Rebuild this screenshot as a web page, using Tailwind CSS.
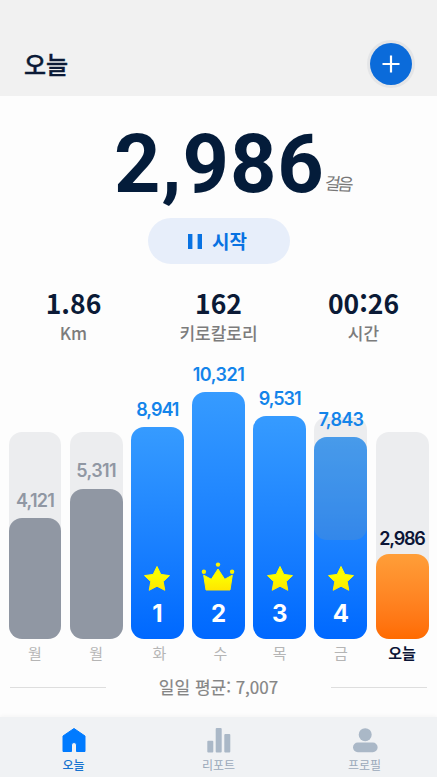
<!DOCTYPE html>
<html lang="ko">
<head>
  <meta charset="UTF-8" />
  <meta name="viewport" content="width=device-width, initial-scale=1.0" />
  <title>오늘</title>
  <script src="https://cdn.jsdelivr.net/npm/@tailwindcss/browser@4"></script>
</head>
<body class="bg-[#fdfdfd] font-['Noto_Sans_CJK_KR',sans-serif]">
  <div class="w-[437px] h-[777px] flex flex-col overflow-hidden">
    <!-- Header -->
    <header class="h-24 shrink-0 bg-[#f1f1f1] flex items-start justify-between pl-6 pr-[22px] pt-10">
      <h1 class="text-2xl leading-12 font-medium text-[#0b1a36] [-webkit-text-stroke:0.4px_#0b1a36]">오늘</h1>
      <button class="size-12 rounded-full bg-[#e4e5e7] flex items-center justify-center">
        <svg class="size-[42px]" viewBox="0 0 42 42">
          <circle cx="21" cy="21" r="21" fill="#0b6bda" />
          <path d="M21 12.5v17M12.5 21h17" stroke="#fff" stroke-width="2.2" />
        </svg>
      </button>
    </header>

    <!-- Step count -->
    <section class="h-[122px] shrink-0 flex items-end justify-start pl-[114px] pb-[6px]">
      <span class="font-[Roboto,sans-serif] font-bold text-[81px] leading-[94px] tracking-[1px] text-[#041c3a]">2,986</span>
      <span class="text-[17px] leading-6 text-[#777] -skew-x-6 rotate-3 tracking-[-2.5px] mb-[17px]">걸음</span>
    </section>
    <button class="w-[142px] h-[46px] shrink-0 mx-auto rounded-full bg-[#e7eefa] flex items-center justify-center gap-[10px] pr-0.5 text-[#0872e2]">
      <svg class="w-[14px] h-[15px]" viewBox="0 0 14 15" fill="currentColor">
        <path d="M0 0h4.4v15H0zM9.6 0H14v15H9.6z" />
      </svg>
      <span class="text-[19px] leading-6 font-bold -mt-px">시작</span>
    </button>

    <!-- Stats -->
    <section class="h-[99px] shrink-0 pt-[22px] px-px grid grid-cols-3 text-center">
      <div>
        <div class="text-[26.5px] leading-[33px] font-bold text-[#0b1a36]">1.86</div>
        <div class="text-[17px] leading-7 font-medium text-[#7c7c7c]">Km</div>
      </div>
      <div>
        <div class="text-[26.5px] leading-[33px] font-bold text-[#0b1a36]">162</div>
        <div class="text-[17px] leading-7 font-medium text-[#7c7c7c]">키로칼로리</div>
      </div>
      <div>
        <div class="text-[26.5px] leading-[33px] font-bold text-[#0b1a36]">00:26</div>
        <div class="text-[17px] leading-7 font-medium text-[#7c7c7c]">시간</div>
      </div>
    </section>

    <!-- Shared fill for the star and crown badges -->
    <svg class="size-0 absolute">
      <linearGradient id="gold" x1="0" y1="0" x2="0" y2="1">
        <stop offset="0.4" stop-color="#fcfc00" />
        <stop offset="1" stop-color="#ffe600" />
      </linearGradient>
    </svg>

    <!-- Weekly chart -->
    <section class="h-[276px] shrink-0 px-[8.5px] grid grid-cols-7 gap-x-[8.2px] items-end font-[Inter,sans-serif] text-[18px] font-semibold text-[#1384ea]">
      <div class="grid items-end text-[#9097a3]">
        <div class="col-start-1 row-start-1 h-[207px] rounded-[13px] bg-[#ecedef]"></div>
        <div class="col-start-1 row-start-1 flex flex-col items-center">
          <span class="h-[29px] leading-6 tracking-[-0.8px]">4,121</span>
          <div class="w-full h-[121px] rounded-[13px] bg-[#9097a3]"></div>
        </div>
      </div>
      <div class="grid items-end text-[#9097a3]">
        <div class="col-start-1 row-start-1 h-[207px] rounded-[13px] bg-[#ecedef]"></div>
        <div class="col-start-1 row-start-1 flex flex-col items-center">
          <span class="h-[30px] leading-6 tracking-[-0.6px]">5,311</span>
          <div class="w-full h-[150px] rounded-[13px] bg-[#9097a3]"></div>
        </div>
      </div>
      <div class="flex flex-col items-center">
        <span class="h-[29px] leading-6 tracking-[-1px]">8,941</span>
        <div class="w-full h-[212px] rounded-[13px] bg-linear-to-b from-[#369bff] to-[#0068ff] flex flex-col items-center justify-end pb-[11px]">
          <svg class="w-7 h-[27px]" viewBox="0 0 28 27"><path d="M14 1.5l3.8 7.9 8.7 1.2-6.3 6 1.6 8.7-7.8-4.1-7.8 4.1 1.6-8.7-6.3-6 8.7-1.2z" fill="url(#gold)" stroke="url(#gold)" stroke-linejoin="round" /></svg>
          <span class="mt-2 text-2xl leading-7 font-bold text-white">1</span>
        </div>
      </div>
      <div class="flex flex-col items-center">
        <span class="h-[29px] leading-6 tracking-[-0.5px]">10,321</span>
        <div class="w-full h-[247px] rounded-[13px] bg-linear-to-b from-[#369bff] to-[#0068ff] flex flex-col items-center justify-end pb-[11px]">
          <svg class="w-[34px] h-[31px]" viewBox="0 0 34 31" fill="url(#gold)">
            <path d="M5 28L2.7 13.2l7.6 4.1L17 7l6.7 10.3 7.6-4.1L29 28z" stroke="url(#gold)" stroke-linejoin="round" />
            <g fill="#fcf300"><circle cx="2.9" cy="9.7" r="2.2" /><circle cx="17" cy="2.6" r="2.2" /><circle cx="31.1" cy="9.7" r="2.2" /></g>
          </svg>
          <span class="mt-[7px] text-2xl leading-7 font-bold text-white">2</span>
        </div>
      </div>
      <div class="flex flex-col items-center">
        <span class="h-[29px] leading-6 tracking-[-1px]">9,531</span>
        <div class="w-full h-[223px] rounded-[13px] bg-linear-to-b from-[#369bff] to-[#0068ff] flex flex-col items-center justify-end pb-[11px]">
          <svg class="w-7 h-[27px]" viewBox="0 0 28 27"><path d="M14 1.5l3.8 7.9 8.7 1.2-6.3 6 1.6 8.7-7.8-4.1-7.8 4.1 1.6-8.7-6.3-6 8.7-1.2z" fill="url(#gold)" stroke="url(#gold)" stroke-linejoin="round" /></svg>
          <span class="mt-2 text-2xl leading-7 font-bold text-white">3</span>
        </div>
      </div>
      <div class="grid items-end">
        <div class="col-start-1 row-start-1 h-[222px] rounded-[13px] bg-linear-to-b from-[#ecedef] from-50% to-transparent to-50%"></div>
        <div class="col-start-1 row-start-1 flex flex-col items-center">
          <span class="h-[29px] leading-6 tracking-[-0.7px]">7,843</span>
          <div class="w-full h-[202px] rounded-[13px] overflow-hidden bg-linear-to-b from-[#369bff] to-[#0068ff] flex flex-col items-center justify-between pb-[11px]">
            <div class="w-full h-[103px] rounded-b-[13px] bg-[#8a9a9f]/22"></div>
            <div class="flex flex-col items-center">
              <svg class="w-7 h-[27px]" viewBox="0 0 28 27"><path d="M14 1.5l3.8 7.9 8.7 1.2-6.3 6 1.6 8.7-7.8-4.1-7.8 4.1 1.6-8.7-6.3-6 8.7-1.2z" fill="url(#gold)" stroke="url(#gold)" stroke-linejoin="round" /></svg>
              <span class="mt-2 text-2xl leading-7 font-bold text-white">4</span>
            </div>
          </div>
        </div>
      </div>
      <div class="grid items-end text-[#0b1536]">
        <div class="col-start-1 row-start-1 h-[207px] rounded-[13px] bg-[#ecedef]"></div>
        <div class="col-start-1 row-start-1 flex flex-col items-center">
          <span class="h-[27px] leading-6 tracking-[-1.2px]">2,986</span>
          <div class="w-full h-[85px] rounded-[13px] bg-linear-to-b from-[#ff9e38] to-[#ff6b00]"></div>
        </div>
      </div>
    </section>
    <div class="h-[30px] shrink-0 px-[8.5px] grid grid-cols-7 gap-x-[8.2px] text-center text-[15px] leading-[27px] text-[#b5b5b5]">
      <span>월</span><span>월</span><span class="pl-1">화</span><span class="pl-1">수</span><span>목</span><span>금</span>
      <span class="font-bold text-[#0b1536]">오늘</span>
    </div>

    <!-- Daily average -->
    <div class="h-[48px] shrink-0 pt-1 px-[10px] flex items-start justify-between text-[17px] leading-7 text-[#858585]">
      <div class="w-24 h-px mt-[14px] bg-[#dedede]"></div>
      <span class="[-webkit-text-stroke:0.2px_#858585]">일일 평균: 7,007</span>
      <div class="w-24 h-px mt-[14px] bg-[#dedede]"></div>
    </div>

    <!-- Tab bar -->
    <nav class="grow bg-[#f0f2f4] shadow-[0_-1px_4px_rgba(0,0,0,0.04)] pt-[10px] px-px grid grid-cols-3 text-xs leading-5 text-[#9ba9ba]">
      <a href="#" class="flex flex-col items-center gap-[2px] text-[#1873cf]">
        <svg class="size-[26px]" viewBox="0 0 26 26"><path d="M13 1.5L24 9v15.5h-8.5V18a2.5 2.5 0 0 0-5 0v6.5H2V9z" fill="#007bff" stroke="#007bff" stroke-linejoin="round" /></svg>
        <span class="font-medium">오늘</span>
      </a>
      <a href="#" class="flex flex-col items-center gap-[2px]">
        <svg class="size-[26px]" viewBox="0 0 26 26" fill="#aab8c7">
          <rect x="1.3" y="13.7" width="6" height="11.7" rx="1" />
          <rect x="9.7" y="1" width="6" height="24.4" rx="1" />
          <rect x="18.3" y="7" width="6" height="18.4" rx="1" />
        </svg>
        <span>리포트</span>
      </a>
      <a href="#" class="flex flex-col items-center gap-[2px] pl-0.5">
        <svg class="size-[26px]" viewBox="0 0 26 26" fill="#aab8c7">
          <circle cx="13.2" cy="7.7" r="6.5" />
          <rect x="1" y="15.5" width="24.6" height="9.7" rx="4.8" />
        </svg>
        <span>프로필</span>
      </a>
    </nav>
  </div>
</body>
</html>
